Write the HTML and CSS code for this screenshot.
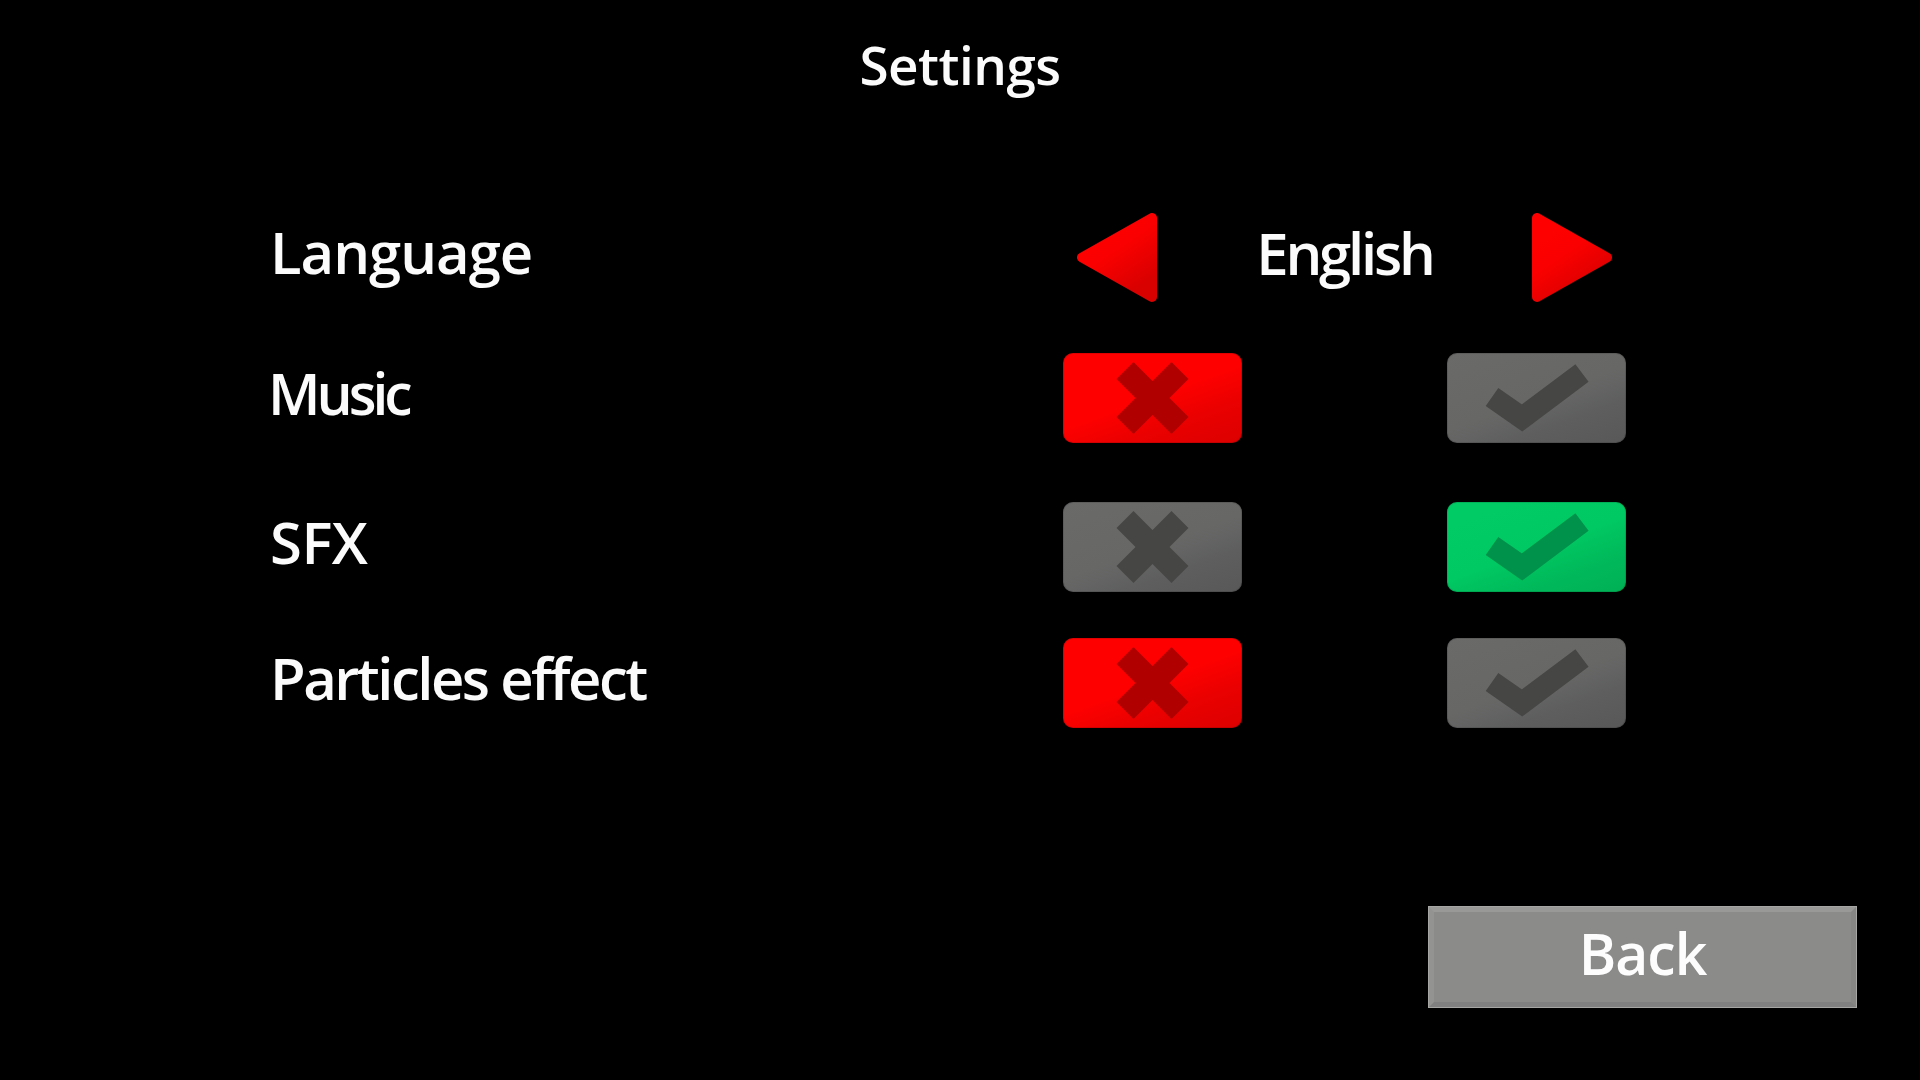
FILE: index.html
```html
<!DOCTYPE html>
<html lang="en">
<head>
<meta charset="utf-8">
<title>Settings</title>
<link rel="stylesheet" href="styles.css">
</head>
<body>
<main class="screen">
  <h1 class="title">Settings</h1>

  <section class="settings">
    <div class="row row-language">
      <div class="label label-language">Language</div>
      <div class="lang-picker">
        <svg class="arrow arrow-left" width="80" height="89" viewBox="0 0 80 89">
          <defs>
            <linearGradient id="ag1" x1="0" y1="0" x2="0.6" y2="1">
              <stop offset="0" stop-color="#ff0000"/>
              <stop offset="0.5" stop-color="#fb0000"/>
              <stop offset="1" stop-color="#d90000"/>
            </linearGradient>
          </defs>
          <polygon points="75,5 75,84 5,44.5" fill="url(#ag1)" stroke="url(#ag1)" stroke-width="10" stroke-linejoin="round"/>
        </svg>
        <span class="lang-value">English</span>
        <svg class="arrow arrow-right" width="80" height="89" viewBox="0 0 80 89">
          <defs>
            <linearGradient id="ag2" x1="0" y1="0" x2="0.6" y2="1">
              <stop offset="0" stop-color="#ff0000"/>
              <stop offset="0.5" stop-color="#fb0000"/>
              <stop offset="1" stop-color="#d90000"/>
            </linearGradient>
          </defs>
          <polygon points="5,5 5,84 75,44.5" fill="url(#ag2)" stroke="url(#ag2)" stroke-width="10" stroke-linejoin="round"/>
        </svg>
      </div>
    </div>

    <div class="row row-music">
      <div class="label label-music">Music</div>
      <div class="toggle toggle-off-active">
        <svg viewBox="0 0 179 90" width="179" height="90"><g class="x-mark"><line x1="62" y1="17.5" x2="117" y2="72.5"/><line x1="117" y1="17.5" x2="62" y2="72.5"/></g></svg>
      </div>
      <div class="spacer"></div>
      <div class="toggle toggle-inactive">
        <svg viewBox="0 0 179 90" width="179" height="90"><polyline class="check-mark" points="45,44 75,65 135,20"/></svg>
      </div>
    </div>

    <div class="row row-sfx">
      <div class="label label-sfx">SFX</div>
      <div class="toggle toggle-inactive">
        <svg viewBox="0 0 179 90" width="179" height="90"><g class="x-mark"><line x1="62" y1="17.5" x2="117" y2="72.5"/><line x1="117" y1="17.5" x2="62" y2="72.5"/></g></svg>
      </div>
      <div class="spacer"></div>
      <div class="toggle toggle-on-active">
        <svg viewBox="0 0 179 90" width="179" height="90"><polyline class="check-mark" points="45,44 75,65 135,20"/></svg>
      </div>
    </div>

    <div class="row row-particles">
      <div class="label label-particles">Particles effect</div>
      <div class="toggle toggle-off-active">
        <svg viewBox="0 0 179 90" width="179" height="90"><g class="x-mark"><line x1="62" y1="17.5" x2="117" y2="72.5"/><line x1="117" y1="17.5" x2="62" y2="72.5"/></g></svg>
      </div>
      <div class="spacer"></div>
      <div class="toggle toggle-inactive">
        <svg viewBox="0 0 179 90" width="179" height="90"><polyline class="check-mark" points="45,44 75,65 135,20"/></svg>
      </div>
    </div>
  </section>

  <footer class="footer">
    <button class="back-btn" type="button">Back</button>
  </footer>
</main>
</body>
</html>
```

FILE: styles.css
```css
html, body {
  margin: 0;
  padding: 0;
  background: #000;
}

body {
  width: 1920px;
  height: 1080px;
  overflow: hidden;
  font-family: "Open Sans", "Liberation Sans", sans-serif;
  color: #fbfbfb;
}

.screen {
  display: flex;
  flex-direction: column;
  height: 1080px;
}

.title {
  margin: 0;
  padding-top: 38px;
  font-size: 53px;
  line-height: 53px;
  font-weight: 600;
  text-align: center;
  letter-spacing: -0.5px;
}

.settings {
  display: flex;
  flex-direction: column;
  margin-top: 122px;
}

.row {
  display: grid;
  grid-template-columns: 1063px 179px 205px 179px;
  height: 90px;
}

.row-music { margin-top: 50px; }
.row-sfx { margin-top: 59px; }
.row-particles { margin-top: 46px; }

.label {
  padding-left: 270px;
  margin-top: 11px;
  font-size: 58px;
  line-height: 58px;
  font-weight: 600;
  white-space: nowrap;
}

.label-language { margin-top: 10px; letter-spacing: -1px; }
.label-music { padding-left: 268px; font-size: 57px; letter-spacing: -4px; }
.label-sfx { letter-spacing: -0.5px; }
.label-particles { letter-spacing: -2.5px; }

.lang-picker {
  grid-column: 2 / 5;
  display: flex;
  align-items: flex-start;
  justify-content: space-between;
  padding-left: 14px;
  padding-right: 14px;
}

.arrow {
  display: block;
  flex: none;
}

.lang-value {
  margin-top: 11px;
  font-size: 58px;
  line-height: 58px;
  font-weight: 600;
  letter-spacing: -3.2px;
}

.toggle {
  width: 179px;
  height: 90px;
  border-radius: 10px;
  overflow: hidden;
  box-shadow: inset 0 0 0 1px rgba(0, 0, 0, 0.12);
}

.toggle svg {
  display: block;
}

.toggle-off-active {
  background: linear-gradient(160deg, #ff0000 0%, #ff0000 48%, #ea0000 72%, #dc0000 100%);
}

.toggle-off-active .x-mark line {
  stroke: #b00000;
}

.toggle-inactive {
  background: linear-gradient(160deg, #6a6b69 0%, #676866 50%, #5e5e5f 72%, #585859 100%);
}

.toggle-inactive .x-mark line,
.toggle-inactive .check-mark {
  stroke: #464745;
}

.toggle-on-active {
  background: linear-gradient(160deg, #00cc66 0%, #00c963 50%, #00b95a 75%, #00b055 100%);
}

.toggle-on-active .check-mark {
  stroke: #00924a;
}

.x-mark line {
  stroke-width: 24;
  stroke-linecap: butt;
}

.check-mark {
  fill: none;
  stroke-width: 22;
  stroke-linecap: butt;
  stroke-linejoin: miter;
}

.footer {
  margin-top: auto;
  margin-bottom: 72px;
  display: flex;
  justify-content: flex-end;
  padding-right: 63px;
}

.back-btn {
  width: 429px;
  height: 102px;
  box-sizing: border-box;
  padding: 0 0 8px 0;
  margin: 0;
  border: 6px solid;
  border-color: #999998 #868685 #808080 #939392;
  outline: 1px solid #a6a6a5;
  outline-offset: -1px;
  background: #8b8c8a;
  color: #fdfdfd;
  font-family: "Open Sans", "Liberation Sans", sans-serif;
  font-size: 57px;
  line-height: 57px;
  font-weight: 600;
  letter-spacing: -1px;
  display: flex;
  align-items: center;
  justify-content: center;
}
```
